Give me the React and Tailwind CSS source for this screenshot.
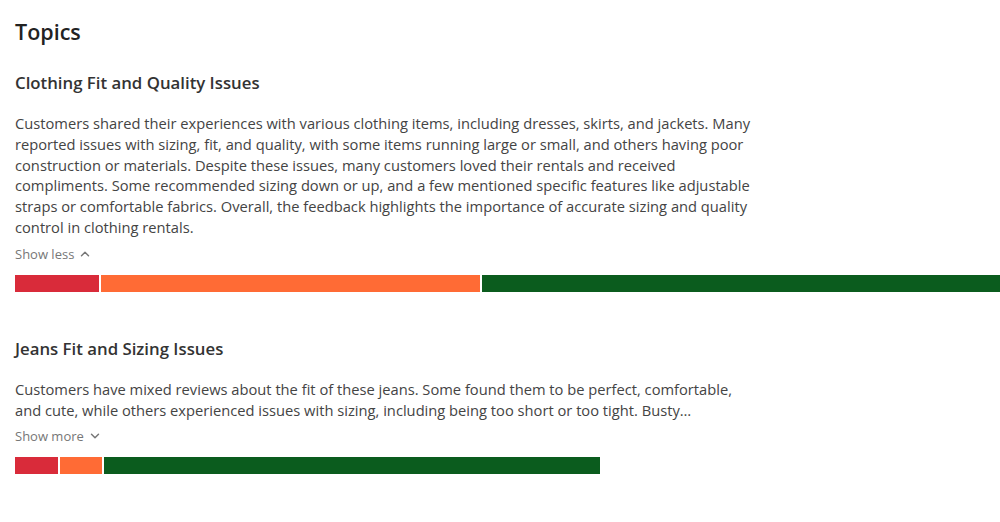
import React, { useState } from 'react';
import { ChevronUp, ChevronDown } from 'lucide-react';

const topics = [
  {
    title: 'Clothing Fit and Quality Issues',
    summary:
      'Customers shared their experiences with various clothing items, including dresses, skirts, and jackets. Many reported issues with sizing, fit, and quality, with some items running large or small, and others having poor construction or materials. Despite these issues, many customers loved their rentals and received compliments. Some recommended sizing down or up, and a few mentioned specific features like adjustable straps or comfortable fabrics. Overall, the feedback highlights the importance of accurate sizing and quality control in clothing rentals.',
    expanded: true,
    bars: [84, 379, 540],
  },
  {
    title: 'Jeans Fit and Sizing Issues',
    summary:
      'Customers have mixed reviews about the fit of these jeans. Some found them to be perfect, comfortable, and cute, while others experienced issues with sizing, including being too short or too tight. Busty\u2026',
    expanded: false,
    bars: [43, 42, 496],
  },
];

const barColors = ['bg-[#d92b3a]', 'bg-[#ff6b35]', 'bg-[#0b5c1e]'];

function Topic({ topic }) {
  const [open, setOpen] = useState(topic.expanded);
  return (
    <div className="flex flex-col">
      <h3 className="text-[16.8px] leading-6 font-semibold text-[#333]">{topic.title}</h3>
      <p className="mt-[18px] w-[741px] text-[14.7px] leading-[20.8px] text-[#444]">{topic.summary}</p>
      <button
        onClick={() => setOpen(!open)}
        className="mt-[6px] flex items-center gap-1 text-[13px] leading-5 text-[#777] self-start"
      >
        {open ? 'Show less' : 'Show more'}
        {open ? <ChevronUp className="w-[14px] h-[14px]" strokeWidth={2.5} /> : <ChevronDown className="w-[14px] h-[14px]" strokeWidth={2.5} />}
      </button>
      <div className="mt-[11px] flex gap-[2px] h-[17px]">
        {topic.bars.map((w, i) => (
          <div key={i} className={`${barColors[i]} h-full shrink-0`} style={{ width: w }} />
        ))}
      </div>
    </div>
  );
}

export default function App() {
  return (
    <div className="min-h-screen bg-white px-[15px] pt-[17px] overflow-hidden" style={{ fontFamily: '"Open Sans", sans-serif' }}>
      <h2 className="text-[21.5px] leading-[30px] font-semibold text-[#222]">Topics</h2>
      <div className="mt-[24px] flex flex-col gap-[45px]">
        {topics.map((t) => (
          <Topic key={t.title} topic={t} />
        ))}
      </div>
    </div>
  );
}
